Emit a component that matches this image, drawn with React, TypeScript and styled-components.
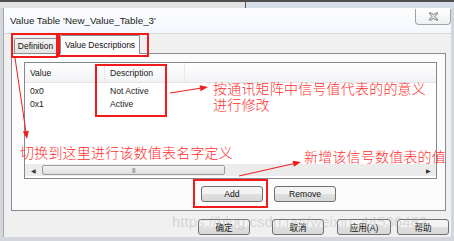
import styled, { createGlobalStyle, css } from 'styled-components';

const GlobalStyle = createGlobalStyle`
  html, body {
    margin: 0;
    padding: 0;
    width: 454px;
    height: 241px;
    overflow: hidden;
    font-family: "Liberation Sans", Arial, sans-serif;
  }
  * { box-sizing: border-box; }
`;

const Screen = styled.div`
  position: relative;
  width: 454px;
  height: 241px;
  display: flex;
  flex-direction: column;
  overflow: hidden;
  background: #cfd4da;
`;

const TopEdge = styled.div`
  height: 8px;
  display: flex;
  border-top: 2px solid #4f4f4f;
`;

const TopLeft = styled.div`
  width: 245px;
  background: #e2e2e2;
`;

const TopRight = styled.div`
  flex: 1;
  background: #d6dfe8;
  border-left: 1px solid #555;
`;

const Window = styled.div`
  flex: 1;
  display: flex;
  flex-direction: column;
  border-left: 3px solid #d3d7dc;
  border-right: 3px solid #d3d7dc;
  border-bottom: 4px solid #d3d7dc;
`;

const TitleBar = styled.div`
  height: 25px;
  display: flex;
  align-items: center;
  justify-content: space-between;
  padding-left: 6px;
  background: linear-gradient(#fdfdfe, #f3f7fc);
  border-left: 1px solid #a4a8ad;
`;

const Title = styled.span`
  font-size: 9.8px;
  color: #1e1e1e;
`;

const CloseButton = styled.div`
  align-self: flex-start;
  margin-top: 1px;
  width: 36px;
  height: 16px;
  display: flex;
  align-items: center;
  justify-content: center;
  border: 1px solid #a3a3a3;
  border-top: none;
  border-radius: 0 0 4px 4px;
  background: linear-gradient(#ffffff, #eef0f2);
`;

const Body = styled.div`
  flex: 1;
  display: flex;
  flex-direction: column;
  background: #f0f0f0;
  border-left: 1px solid #a4a8ad;
  border-top: 1px solid #d9d9d9;
`;

const TabStrip = styled.div`
  height: 19px;
  display: flex;
  align-items: flex-end;
  padding-left: 10px;
`;

const Tab = styled.div<{ $active?: boolean }>`
  display: flex;
  align-items: center;
  justify-content: center;
  font-size: 8.5px;
  color: #111;
  border: 1px solid #898c95;
  border-bottom: none;
  border-radius: 2px 2px 0 0;
  ${({ $active }) =>
    $active
      ? css`
          height: 19px;
          width: 80px;
          margin-left: 3px;
          margin-bottom: -1px;
          background: #fcfcfc;
          position: relative;
          z-index: 1;
        `
      : css`
          height: 15px;
          width: 43px;
          background: linear-gradient(#f3f3f3, #e3e3e3);
        `}
`;

const TabPage = styled.div`
  height: 158px;
  margin: 0 5px 0 7px;
  border: 1px solid #898c95;
  background: #fcfcfc;
  padding: 8px 8px 0 12px;
  display: flex;
  flex-direction: column;
`;

const ListView = styled.div`
  height: 117px;
  border: 1px solid #828790;
  background: #fff;
  display: flex;
  flex-direction: column;
`;

const ListHeader = styled.div`
  height: 20px;
  display: flex;
  background: linear-gradient(#ffffff, #f1f2f4);
  border-bottom: 1px solid #e5e5e5;
`;

const Cell = styled.div<{ $w?: number }>`
  width: ${({ $w }) => ($w ? `${$w}px` : 'auto')};
  flex: ${({ $w }) => ($w ? 'none' : '1')};
  display: flex;
  align-items: center;
  padding-left: 5px;
  font-size: 8.6px;
  color: #1a1a1a;
  white-space: nowrap;
`;

const HeaderCell = styled(Cell)`
  border-right: 1px solid #e8e8e8;
`;

const Rows = styled.div`
  flex: 1;
  padding-top: 1px;
`;

const Row = styled.div`
  height: 13px;
  display: flex;
`;

const HScroll = styled.div`
  height: 12px;
  margin: 0 0 2px;
  display: flex;
  align-items: center;
  background: #ececec;
  padding: 0 2px;
`;

const ScrollArrow = styled.div`
  width: 12px;
  display: flex;
  align-items: center;
  justify-content: center;
  font-size: 6px;
  color: #333;
`;

const ScrollTrack = styled.div`
  flex: 1;
  height: 100%;
  display: flex;
  align-items: center;
`;

const Thumb = styled.div`
  margin-left: 3px;
  width: 183px;
  height: 10px;
  border: 1px solid #9c9c9c;
  border-radius: 2px;
  background: linear-gradient(#f4f4f4, #dedede);
  display: flex;
  align-items: center;
  justify-content: center;
  font-size: 6px;
  letter-spacing: -0.5px;
  color: #666;
`;

const PageButtons = styled.div`
  margin-top: 7px;
  padding-left: 177px;
  display: flex;
  gap: 11px;
`;

const Button = styled.div<{ $w?: number; $ml?: number }>`
  width: ${({ $w }) => $w ?? 62}px;
  margin-left: ${({ $ml }) => $ml ?? 0}px;
  height: 16px;
  display: flex;
  align-items: center;
  justify-content: center;
  border: 1px solid #707070;
  border-radius: 3px;
  background: linear-gradient(#f3f3f3 50%, #e0e0e0 50%, #d8d8d8);
  font-size: 8.6px;
  color: #111;
  font-family: "Liberation Sans", "Noto Sans CJK SC", sans-serif;
`;

const DialogButtons = styled.div`
  margin-top: 8px;
  padding-left: 194px;
  display: flex;
`;

const Watermark = styled.div`
  position: absolute;
  left: 172px;
  top: 213px;
  font-size: 15px;
  color: rgba(170, 170, 170, 0.4);
  white-space: nowrap;
  pointer-events: none;
`;

const RedBox = styled.div`
  position: absolute;
  border: 2px solid #f21b1b;
  pointer-events: none;
`;

const Note = styled.div`
  position: absolute;
  font-family: "Noto Sans CJK SC", sans-serif;
  font-size: 14px;
  font-weight: 300;
  line-height: 14px;
  letter-spacing: 0.2px;
  color: #ff2f2f;
  white-space: nowrap;
`;

const Overlay = styled.svg`
  position: absolute;
  left: 0;
  top: 0;
  pointer-events: none;
`;

function Arrow({ x1, y1, x2, y2 }: { x1: number; y1: number; x2: number; y2: number }) {
  const a = Math.atan2(y2 - y1, x2 - x1);
  const len = 8;
  const half = 3;
  const bx = x2 - len * Math.cos(a);
  const by = y2 - len * Math.sin(a);
  const px = -Math.sin(a) * half;
  const py = Math.cos(a) * half;
  const pts = `${x2},${y2} ${bx + px},${by + py} ${bx - px},${by - py}`;
  return (
    <g>
      <line x1={x1} y1={y1} x2={bx} y2={by} stroke="#f21b1b" strokeWidth={1} />
      <polygon points={pts} fill="#f21b1b" />
    </g>
  );
}

export default function App() {
  return (
    <>
      <GlobalStyle />
      <Screen>
        <TopEdge>
          <TopLeft />
          <TopRight />
        </TopEdge>
        <Window>
          <TitleBar>
            <Title>Value Table 'New_Value_Table_3'</Title>
            <CloseButton>
              <svg width="11" height="9" viewBox="0 0 11 9">
                <path
                  d="M1 1 L3.5 1 L5.5 3 L7.5 1 L10 1 L7 4.5 L10 8 L7.5 8 L5.5 6 L3.5 8 L1 8 L4 4.5 Z"
                  fill="#e6e6e6"
                  stroke="#6f6f6f"
                  strokeWidth={0.9}
                />
              </svg>
            </CloseButton>
          </TitleBar>
          <Body>
            <TabStrip>
              <Tab>Definition</Tab>
              <Tab $active>Value Descriptions</Tab>
            </TabStrip>
            <TabPage>
              <ListView>
                <ListHeader>
                  <HeaderCell $w={80}>Value</HeaderCell>
                  <HeaderCell $w={80}>Description</HeaderCell>
                  <Cell />
                </ListHeader>
                <Rows>
                  <Row>
                    <Cell $w={80}>0x0</Cell>
                    <Cell $w={80}>Not Active</Cell>
                  </Row>
                  <Row>
                    <Cell $w={80}>0x1</Cell>
                    <Cell $w={80}>Active</Cell>
                  </Row>
                </Rows>
                <HScroll>
                  <ScrollArrow>◀</ScrollArrow>
                  <ScrollTrack>
                    <Thumb>|||</Thumb>
                  </ScrollTrack>
                  <ScrollArrow>▶</ScrollArrow>
                </HScroll>
              </ListView>
              <PageButtons>
                <Button>Add</Button>
                <Button>Remove</Button>
              </PageButtons>
            </TabPage>
            <DialogButtons>
              <Button $w={52}>确定</Button>
              <Button $w={52} $ml={22}>取消</Button>
              <Button $w={54} $ml={13}>应用(A)</Button>
              <Button $w={52} $ml={6}>帮助</Button>
            </DialogButtons>
          </Body>
        </Window>

        <Watermark>https://blog.csdn.net/weixin_44536482</Watermark>

        <RedBox style={{ left: 11, top: 33, width: 47, height: 25 }} />
        <RedBox style={{ left: 58, top: 33, width: 91, height: 24 }} />
        <RedBox style={{ left: 95, top: 64, width: 72, height: 53 }} />
        <RedBox style={{ left: 193, top: 179, width: 75, height: 29 }} />

        <Overlay width={454} height={241}>
          <Arrow x1={15} y1={58} x2={27} y2={139} />
          <Arrow x1={170} y1={93} x2={208} y2={87} />
          <Arrow x1={239} y1={176} x2={301} y2={162} />
        </Overlay>

        <Note style={{ left: 213, top: 81 }}>按通讯矩阵中信号值代表的的意义</Note>
        <Note style={{ left: 213, top: 97 }}>进行修改</Note>
        <Note style={{ left: 20, top: 145 }}>切换到这里进行该数值表名字定义</Note>
        <Note style={{ left: 304, top: 149 }}>新增该信号数值表的值</Note>
      </Screen>
    </>
  );
}
